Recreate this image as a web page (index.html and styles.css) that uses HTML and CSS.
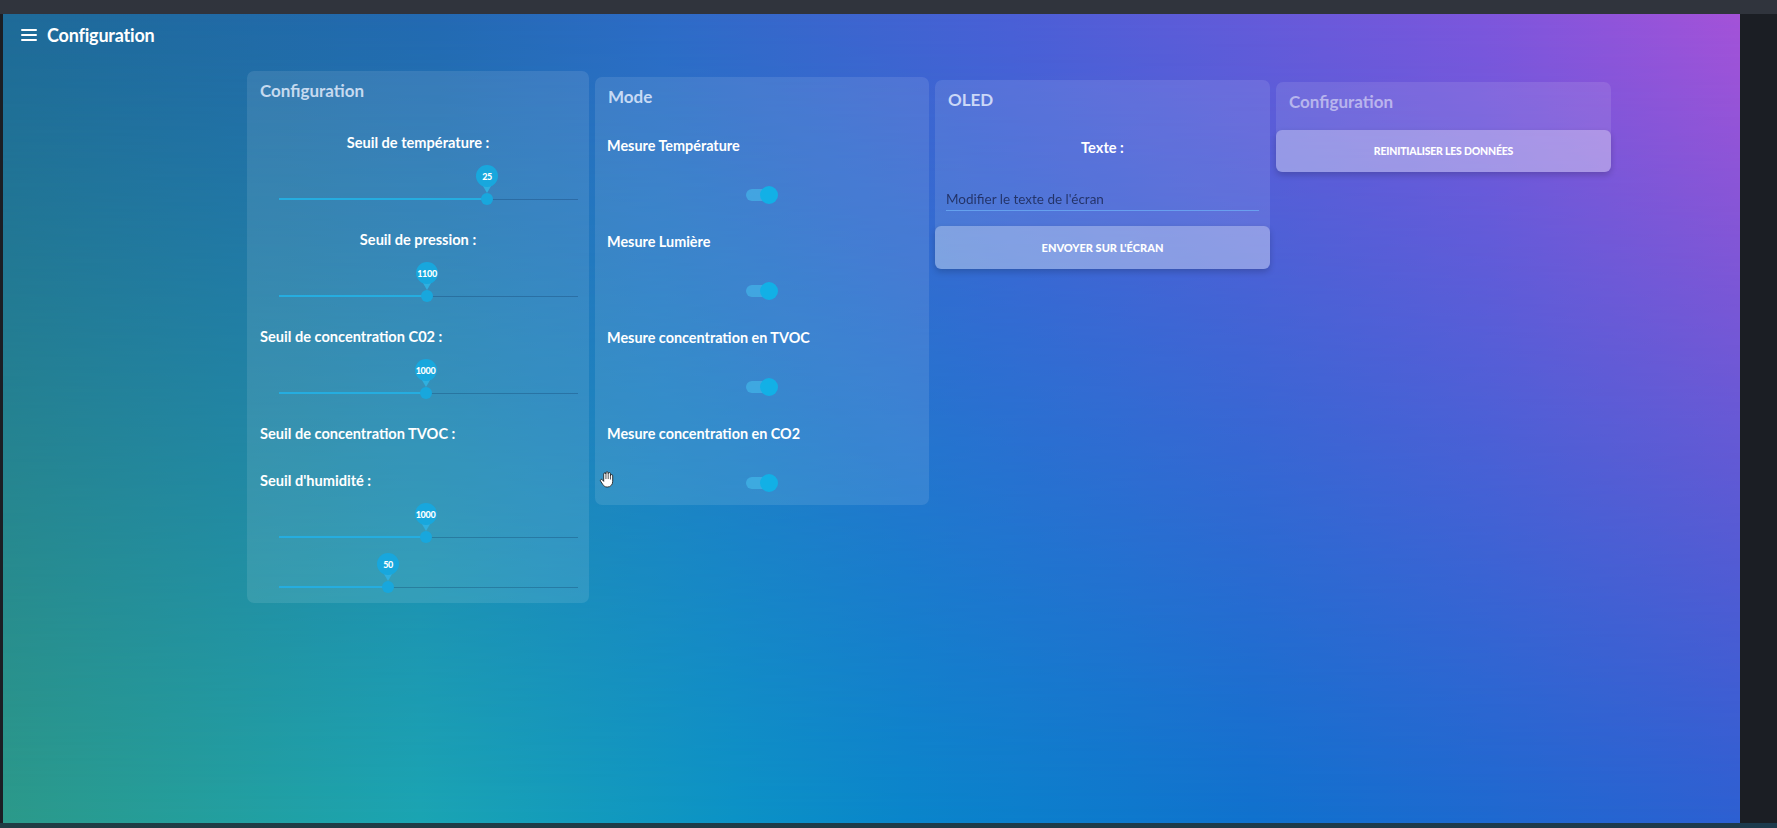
FILE: index.html
```html
<!DOCTYPE html>
<html lang="fr">
<head>
<meta charset="utf-8">
<title>Configuration</title>
<link rel="stylesheet" href="styles.css">
</head>
<body>
<div class="topbar"></div>
<div class="screen">
  <header class="appbar">
    <svg class="appbar-icon" viewBox="0 0 16 12" width="16" height="12" aria-hidden="true">
      <rect x="0" y="0" width="16" height="2" rx="1" fill="#fff"/>
      <rect x="0" y="5" width="16" height="2" rx="1" fill="#fff"/>
      <rect x="0" y="10" width="16" height="2" rx="1" fill="#fff"/>
    </svg>
    <span class="appbar-title">Configuration</span>
  </header>

  <main class="cards">
    <section class="card card--config">
      <h2 class="card-title">Configuration</h2>
      <div class="fields">
        <label class="field-label field-label--center">Seuil de température :</label>
        <div class="slider">
          <div class="slider-rail"></div>
          <div class="slider-fill" style="width:69.6%"></div>
          <div class="slider-thumb" style="left:69.6%"><span class="slider-bubble">25</span></div>
        </div>
        <label class="field-label field-label--center">Seuil de pression :</label>
        <div class="slider">
          <div class="slider-rail"></div>
          <div class="slider-fill" style="width:49.5%"></div>
          <div class="slider-thumb" style="left:49.5%"><span class="slider-bubble">1100</span></div>
        </div>
        <label class="field-label">Seuil de concentration C02 :</label>
        <div class="slider">
          <div class="slider-rail"></div>
          <div class="slider-fill" style="width:49%"></div>
          <div class="slider-thumb" style="left:49%"><span class="slider-bubble">1000</span></div>
        </div>
        <label class="field-label">Seuil de concentration TVOC :</label>
        <label class="field-label">Seuil d'humidité :</label>
        <div class="slider">
          <div class="slider-rail"></div>
          <div class="slider-fill" style="width:49%"></div>
          <div class="slider-thumb" style="left:49%"><span class="slider-bubble">1000</span></div>
        </div>
        <div class="slider">
          <div class="slider-rail"></div>
          <div class="slider-fill" style="width:36.5%"></div>
          <div class="slider-thumb" style="left:36.5%"><span class="slider-bubble">50</span></div>
        </div>
      </div>
    </section>

    <section class="card card--mode">
      <h2 class="card-title">Mode</h2>
      <div class="modes">
        <div class="mode-item">
          <div class="mode-label">Mesure Température</div>
          <div class="toggle"><span class="toggle-track"></span><span class="toggle-knob"></span></div>
        </div>
        <div class="mode-item">
          <div class="mode-label">Mesure Lumière</div>
          <div class="toggle"><span class="toggle-track"></span><span class="toggle-knob"></span></div>
        </div>
        <div class="mode-item">
          <div class="mode-label">Mesure concentration en TVOC</div>
          <div class="toggle"><span class="toggle-track"></span><span class="toggle-knob"></span></div>
        </div>
        <div class="mode-item">
          <div class="mode-label">Mesure concentration en CO2</div>
          <div class="toggle"><span class="toggle-track"></span><span class="toggle-knob"></span></div>
        </div>
      </div>
    </section>

    <section class="card card--oled">
      <h2 class="card-title">OLED</h2>
      <div class="oled-label">Texte :</div>
      <input class="oled-input" type="text" placeholder="Modifier le texte de l'écran">
      <button class="btn">Envoyer sur l'écran</button>
    </section>

    <section class="card card--reset">
      <h2 class="card-title card-title--faded">Configuration</h2>
      <button class="btn btn--reset">Reinitialiser les données</button>
    </section>
  </main>

  <svg class="cursor" viewBox="0 0 16 18" width="15" height="17" aria-hidden="true">
    <path d="M5 11V3.2a1.2 1.2 0 0 1 2.4 0V2a1.2 1.2 0 0 1 2.4 0v0.8a1.2 1.2 0 0 1 2.4 0V5a1.2 1.2 0 0 1 2.4 0v6c0 3.5-2.2 6-5.5 6H8.5C6.5 17 5.3 16 4.2 14.5L1.6 10.6a1.2 1.2 0 0 1 2-1.3Z" fill="#fff" stroke="#1b1b1b" stroke-width="0.9" stroke-linejoin="round"/>
    <path d="M7.4 3.2V8.5M9.8 2.8V8.5M12.2 5V9" fill="none" stroke="#1b1b1b" stroke-width="0.8"/>
  </svg>
</div>
<div class="bottombar"></div>
</body>
</html>
```
FILE: styles.css
```css
* { box-sizing: border-box; }

html, body {
  margin: 0;
  height: 828px;
  overflow: hidden;
}

body {
  background: #1b1e24;
  font-family: Lato, "Liberation Sans", sans-serif;
  color: #fff;
}

.topbar {
  height: 14px;
  background: #30343d;
}

.bottombar {
  height: 5px;
  background: linear-gradient(to right, #1f3d44, #1d3a4c);
}

.screen {
  position: relative;
  height: 809px;
  margin: 0 37px 0 3px;
  overflow: hidden;
  isolation: isolate;
  background: linear-gradient(to right, #2c9a8a 0%, #1ba5b3 24%, #0c93c6 42%, #0a86cb 52%, #1072ce 72%, #2d60d2 100%);
}

.screen::before {
  content: "";
  position: absolute;
  inset: 0;
  z-index: -1;
  background: linear-gradient(to right, #1e6a98 0%, #2369b2 25%, #2d6bc6 38%, #4a5fd6 58%, #7c56dc 85%, #a452d8 100%);
  -webkit-mask-image: linear-gradient(to bottom, #000 0%, rgba(0,0,0,0.55) 45%, rgba(0,0,0,0) 100%);
  mask-image: linear-gradient(to bottom, #000 0%, rgba(0,0,0,0.55) 45%, rgba(0,0,0,0) 100%);
}

/* App bar */
.appbar {
  height: 41px;
  display: flex;
  align-items: center;
  gap: 10px;
  padding-left: 18px;
}

.appbar-icon { display: block; }

.appbar-title {
  font-size: 18px;
  font-weight: 700;
  letter-spacing: -0.2px;
}

/* Cards row */
.cards {
  display: flex;
  align-items: flex-start;
  gap: 6px;
  margin: 16px 0 0 244px;
}

.card {
  background: rgba(255, 255, 255, 0.1);
  border-radius: 7px;
}

.card--config { width: 342px; padding-bottom: 12px; }
.card--mode { width: 334px; margin-top: 6px; padding-bottom: 12px; }
.card--oled { width: 335px; margin-top: 9px; }
.card--reset { width: 335px; margin-top: 11px; }

.card-title {
  margin: 0;
  padding: 8px 13px 0;
  font-size: 17px;
  line-height: 24px;
  font-weight: 700;
  color: rgba(232, 240, 255, 0.82);
}

.card-title--faded { color: rgba(255, 255, 255, 0.5); }

/* Sliders */
.fields {
  display: flex;
  flex-direction: column;
  padding-top: 3px;
}

.field-label {
  display: block;
  margin-top: 27px;
  padding: 0 13px;
  font-size: 14.6px;
  line-height: 20px;
  font-weight: 700;
  color: #fff;
}

.field-label--center { text-align: center; }

.slider {
  position: relative;
  height: 50px;
  margin: 0 11px 0 32px;
}

.slider-rail {
  position: absolute;
  left: 0;
  right: 0;
  top: 46px;
  height: 1px;
  background: rgba(10, 45, 90, 0.28);
}

.slider-fill {
  position: absolute;
  left: 0;
  top: 45px;
  height: 2px;
  background: #25ade0;
}

.slider-thumb {
  position: absolute;
  top: 40px;
  width: 12px;
  height: 12px;
  margin-left: -6px;
  border-radius: 50%;
  background: #18a7dd;
}

.slider-bubble {
  position: absolute;
  left: -5px;
  top: -28px;
  width: 22px;
  height: 22px;
  border-radius: 50%;
  background: #18a7dd;
  display: flex;
  align-items: center;
  justify-content: center;
  font-size: 9px;
  font-weight: 900;
  letter-spacing: -0.3px;
  color: #fff;
}

.slider-bubble::after {
  content: "";
  position: absolute;
  left: 50%;
  top: 16px;
  margin-left: -7px;
  border-left: 7px solid transparent;
  border-right: 7px solid transparent;
  border-top: 12px solid #18a7dd;
  z-index: -1;
}

/* Mode toggles */
.mode-item { padding-top: 27px; }

.mode-label {
  padding: 0 12px;
  font-size: 14.4px;
  line-height: 20px;
  font-weight: 700;
}

.toggle {
  position: relative;
  width: 32px;
  height: 20px;
  margin: 29px auto 0;
}

.toggle-track {
  position: absolute;
  left: 0;
  right: 2px;
  top: 4px;
  height: 12px;
  border-radius: 6px;
  background: rgba(70, 195, 240, 0.55);
}

.toggle-knob {
  position: absolute;
  right: 0;
  top: 1px;
  width: 18px;
  height: 18px;
  border-radius: 50%;
  background: #12b0e6;
}

/* OLED */
.oled-label {
  margin-top: 26px;
  text-align: center;
  font-size: 14.6px;
  line-height: 20px;
  font-weight: 700;
}

.oled-input {
  display: block;
  width: calc(100% - 22px);
  height: 23px;
  margin: 30px 11px 0;
  padding: 0;
  border: 0;
  border-bottom: 1px solid rgba(110, 175, 245, 0.75);
  background: transparent;
  font-family: Lato, "Liberation Sans", sans-serif;
  font-size: 13.5px;
  color: #1c2a58;
  outline: none;
}

.oled-input::placeholder { color: #1f2c5c; opacity: 0.9; }

.btn {
  display: block;
  width: 100%;
  height: 43px;
  margin-top: 15px;
  border: 0;
  border-radius: 6px;
  background: rgba(255, 255, 255, 0.3);
  box-shadow: 0 3px 6px rgba(0, 0, 0, 0.18);
  font-family: Lato, "Liberation Sans", sans-serif;
  font-size: 11px;
  font-weight: 900;
  text-transform: uppercase;
  color: #fff;
}

.btn--reset {
  height: 42px;
  margin-top: 16px;
  font-size: 10.5px;
  letter-spacing: -0.2px;
}

.cursor {
  position: absolute;
  left: 596px;
  top: 457px;
}
```
